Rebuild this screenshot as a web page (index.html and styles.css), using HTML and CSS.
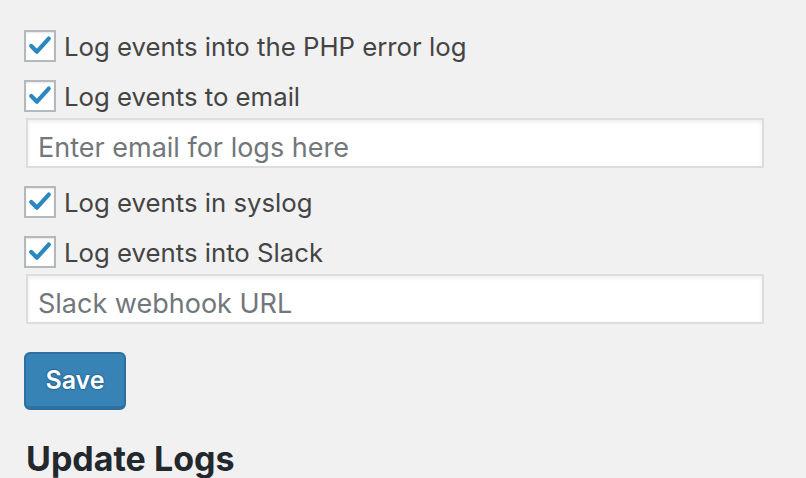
FILE: index.html
```html
<!DOCTYPE html>
<html>
<head>
<meta charset="utf-8">
<link rel="stylesheet" href="styles.css">
</head>
<body>
<div class="wrap">
  <form class="settings">
    <label class="opt">
      <span class="box"><svg viewBox="0 0 32 32" width="28" height="28"><path d="M6 16 L12.5 22.5 L26 7.5" fill="none" stroke="#2a87c0" stroke-width="4.8" stroke-linecap="round" stroke-linejoin="round"/></svg></span>
      <span class="txt">Log events into the PHP error log</span>
    </label>
    <div class="group">
      <label class="opt">
        <span class="box"><svg viewBox="0 0 32 32" width="28" height="28"><path d="M6 16 L12.5 22.5 L26 7.5" fill="none" stroke="#2a87c0" stroke-width="4.8" stroke-linecap="round" stroke-linejoin="round"/></svg></span>
        <span class="txt">Log events to email</span>
      </label>
      <input class="field" type="text" placeholder="Enter email for logs here">
    </div>
    <label class="opt">
      <span class="box"><svg viewBox="0 0 32 32" width="28" height="28"><path d="M6 16 L12.5 22.5 L26 7.5" fill="none" stroke="#2a87c0" stroke-width="4.8" stroke-linecap="round" stroke-linejoin="round"/></svg></span>
      <span class="txt">Log events in syslog</span>
    </label>
    <div class="group">
      <label class="opt">
        <span class="box"><svg viewBox="0 0 32 32" width="28" height="28"><path d="M6 16 L12.5 22.5 L26 7.5" fill="none" stroke="#2a87c0" stroke-width="4.8" stroke-linecap="round" stroke-linejoin="round"/></svg></span>
        <span class="txt">Log events into Slack</span>
      </label>
      <input class="field" type="text" placeholder="Slack webhook URL">
    </div>
    <button type="button" class="btn">Save</button>
  </form>
  <h2 class="title">Update Logs</h2>
</div>
</body>
</html>
```
FILE: styles.css
```css
html, body {
  margin: 0;
  padding: 0;
  background: #f1f1f1;
  overflow: hidden;
}
body {
  font-family: Inter, "Liberation Sans", Arial, sans-serif;
  color: #444;
}
.wrap {
  padding: 30px 0 0 24px;
}
.settings {
  display: flex;
  flex-direction: column;
  gap: 18px;
  align-items: flex-start;
}
.group {
  display: flex;
  flex-direction: column;
  gap: 6px;
}
.opt {
  display: flex;
  align-items: center;
  gap: 8px;
  height: 32px;
  font-size: 25.75px;
  line-height: 33px;
  color: #444;
}
.box {
  box-sizing: border-box;
  width: 32px;
  height: 32px;
  border: 2px solid #b4b9be;
  background: #fff;
  display: flex;
  align-items: center;
  justify-content: center;
  box-shadow: inset 0 1px 2px rgba(0,0,0,.1);
}
.box svg { display: block; }
.field {
  box-sizing: border-box;
  margin: 0 0 0 2px;
  width: 738px;
  height: 50px;
  border: 2px solid #ddd;
  background: #fff;
  box-shadow: inset 0 2px 4px rgba(0,0,0,.07);
  padding: 8px 10px 0 10px;
  font-family: Inter, "Liberation Sans", Arial, sans-serif;
  font-size: 27px;
  line-height: 36px;
  color: #32373c;
  outline: none;
}
.field::placeholder {
  color: #72777c;
  opacity: 1;
}
.btn {
  margin-top: 10px;
  box-sizing: border-box;
  width: 102px;
  height: 58px;
  border: 2px solid #2d6f9e;
  border-bottom-width: 4px;
  border-radius: 6px;
  background: #3783b6;
  color: #fff;
  font-family: Inter, "Liberation Sans", Arial, sans-serif;
  font-weight: 600;
  font-size: 25px;
  text-shadow: 0 -1px 1px #2a6a98, 1px 0 1px #2a6a98, 0 1px 1px #2a6a98, -1px 0 1px #2a6a98;
  padding: 0;
  cursor: pointer;
}
.title {
  margin: 29px 0 0 2px;
  font-size: 34px;
  line-height: 40px;
  font-weight: 700;
  color: #23282d;
}
```
